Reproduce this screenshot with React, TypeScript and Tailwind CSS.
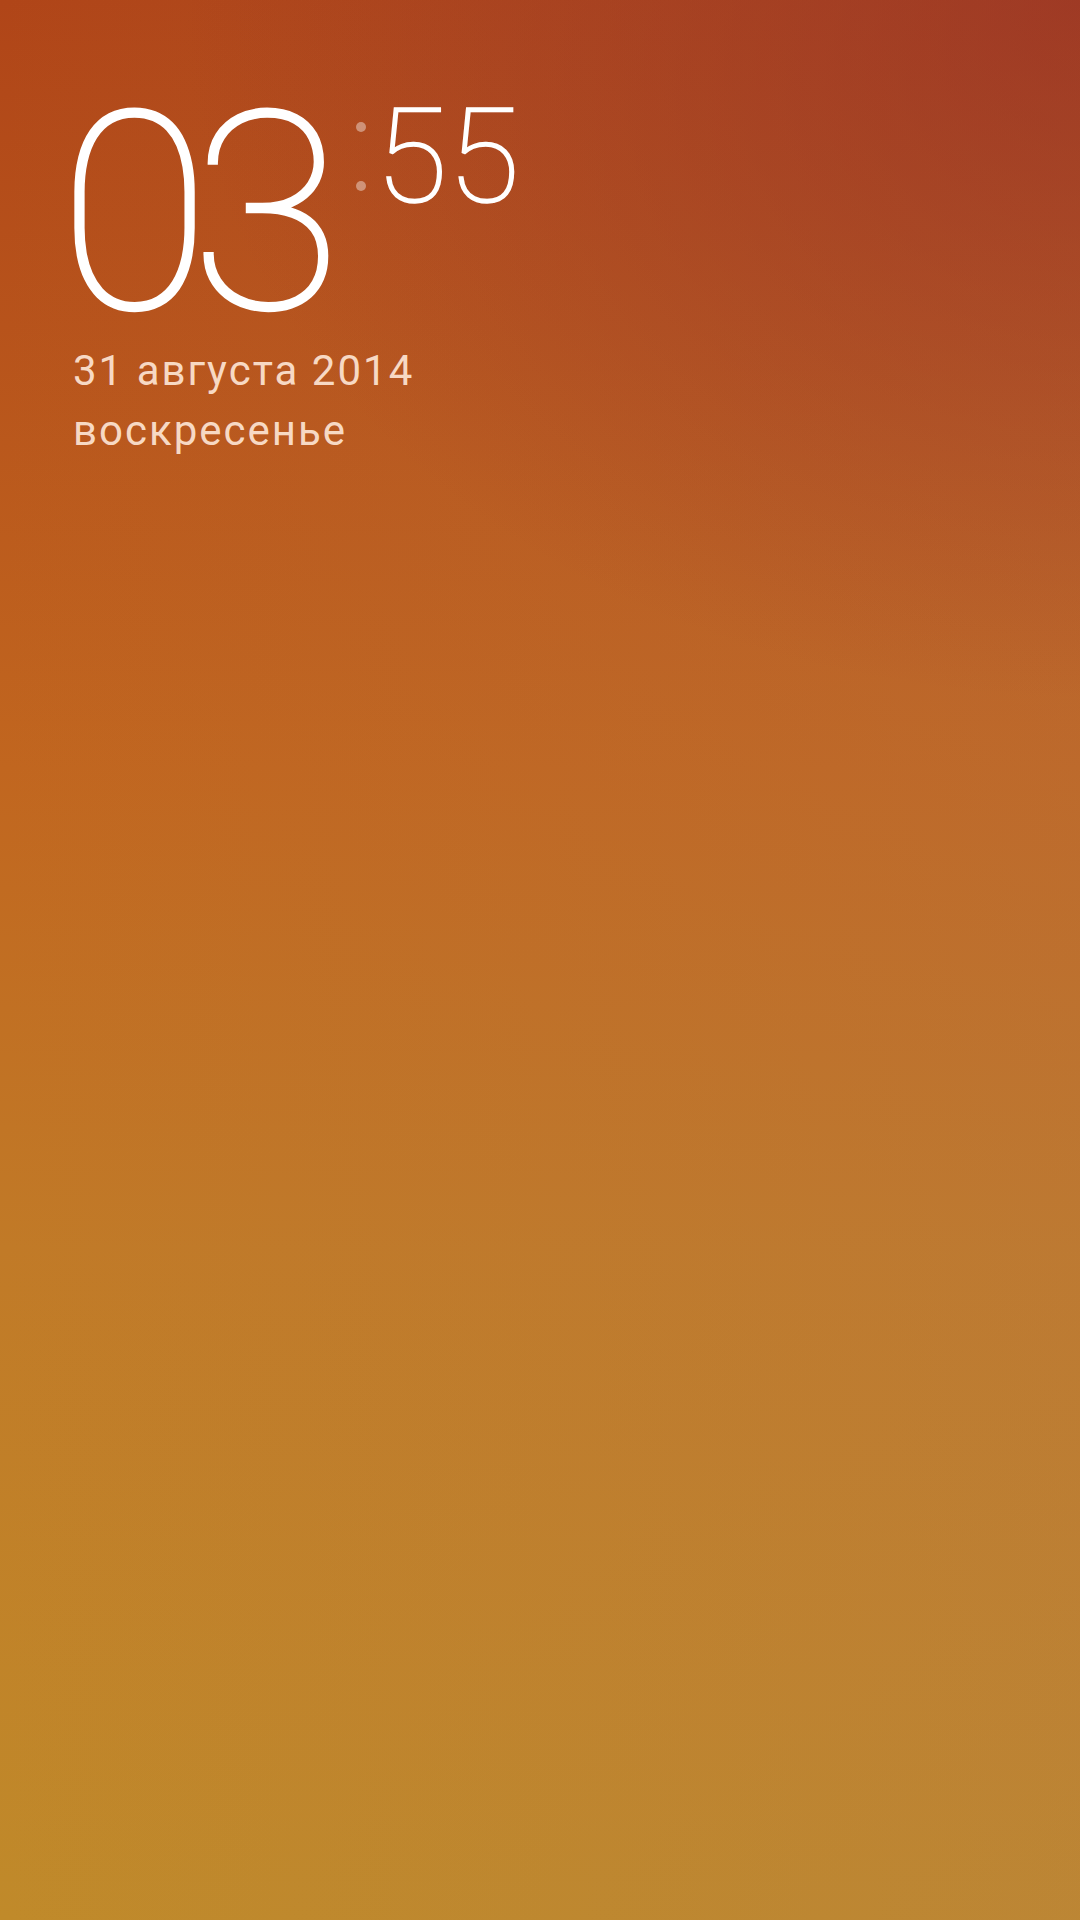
export default function App() {
  return (
    <div className="relative w-[1080px] h-[1920px] overflow-hidden bg-[radial-gradient(ellipse_900px_700px_at_100%_0%,rgba(145,40,35,0.55),transparent),linear-gradient(to_right,rgba(0,0,0,0),rgba(175,120,90,0.22)),linear-gradient(to_bottom,#b04518_0%,#c1661f_40%,#c17a27_65%,#c08a2a_100%)] font-['Roboto',sans-serif]">
      <div className="pt-[107px]">
        <div className="flex items-start pl-[59px]">
          <span className="text-[276px] leading-[220px] font-thin text-white tracking-[-19px] -mt-[3px] [-webkit-text-stroke:3px_white]">03</span>
          <div className="flex flex-col gap-[49px] pt-[15px] ml-[33px] mr-[9px]">
            <span className="block w-[10px] h-[10px] rounded-full bg-white/40" />
            <span className="block w-[10px] h-[10px] rounded-full bg-white/40" />
          </div>
          <span className="text-[132px] leading-none font-thin text-white -mt-[16px] [-webkit-text-stroke:1.5px_white]">55</span>
        </div>
        <div className="mt-[17px] pl-[73px] text-[42px] leading-[60px] tracking-[2px] text-[#f7d9c4]">
          <div>31 августа 2014</div>
          <div>воскресенье</div>
        </div>
      </div>
    </div>
  );
}
